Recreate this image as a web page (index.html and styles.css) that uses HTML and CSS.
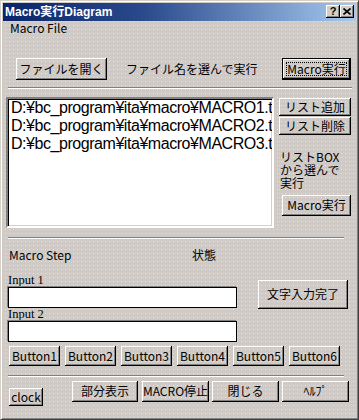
FILE: index.html
```html
<!DOCTYPE html>
<html lang="ja">
<head>
<meta charset="utf-8">
<link rel="stylesheet" href="styles.css">
</head>
<body>
<div class="window">
  <div class="titlebar">
    <span class="title">Macro実行Diagram</span>
    <span class="tbtn help">?</span>
    <span class="tbtn close"><svg width="8" height="7" viewBox="0 0 8 7"><path d="M0.5 0.5 L7.5 6.5 M7.5 0.5 L0.5 6.5" stroke="#000" stroke-width="1.6" fill="none"/></svg></span>
  </div>
  <div class="menu">Macro File</div>
  <div class="toprow">
    <button class="btn open">ファイルを開く</button>
    <span class="hint">ファイル名を選んで実行</span>
    <button class="btn default run1">Macro実行</button>
  </div>
  <div class="sep sep1"></div>
  <div class="mid">
    <div class="listbox">
      <div class="item">D:¥bc_program¥ita¥macro¥MACRO1.txt</div>
      <div class="item">D:¥bc_program¥ita¥macro¥MACRO2.txt</div>
      <div class="item">D:¥bc_program¥ita¥macro¥MACRO3.txt</div>
    </div>
    <div class="side">
      <button class="btn sbtn add">リスト追加</button>
      <button class="btn sbtn">リスト削除</button>
      <div class="sidelabel"><div class="sl">リストBOX</div><div class="sl">から選んで</div><div class="sl">実行</div></div>
      <button class="btn run2">Macro実行</button>
    </div>
  </div>
  <div class="sep sep2"></div>
  <div class="steprow"><span class="step">Macro Step</span><span class="state">状態</span></div>
  <div class="inputs">
    <div class="incol">
      <div class="inlabel">Input 1</div>
      <div class="field"></div>
      <div class="inlabel">Input 2</div>
      <div class="field"></div>
    </div>
    <button class="btn done">文字入力完了</button>
  </div>
  <div class="btnrow">
    <button class="btn nb">Button1</button>
    <button class="btn nb">Button2</button>
    <button class="btn nb">Button3</button>
    <button class="btn nb">Button4</button>
    <button class="btn nb">Button5</button>
    <button class="btn nb">Button6</button>
  </div>
  <div class="sep sep3"></div>
  <div class="bottom">
    <button class="btn clock">clock</button>
    <button class="btn bb part">部分表示</button>
    <button class="btn bb stop">MACRO停止</button>
    <button class="btn bb">閉じる</button>
    <button class="btn bb">ﾍﾙﾌﾟ</button>
  </div>
</div>
</body>
</html>
```
FILE: styles.css
```css
* { box-sizing: border-box; }
body {
  margin: 0;
  font-family: "Noto Sans CJK JP", sans-serif;
  font-size: 12px;
  color: #000;
  background: #fff;
}
.window {
  width: 359px;
  height: 420px;
  border: 1px solid;
  border-color: #d4d0c8 #404040 #404040 #d4d0c8;
  box-shadow: inset 1px 1px #fff, inset -1px -1px #808080;
  padding: 2px;
  background-color: #cfc9c6;
  background-image:
    conic-gradient(at 1px 1px, transparent 75%, #f0eeb8 0),
    conic-gradient(at 1px 1px, transparent 75%, #e8c6c8 0);
  background-size: 4px 4px, 4px 2px;
  background-position: 0 0, 2px 1px;
  display: flex;
  flex-direction: column;
}
.titlebar {
  height: 18px;
  display: flex;
  align-items: flex-start;
  background: linear-gradient(90deg, #0a246a 0%, #2a4a8c 40%, #a6caf0 100%);
  padding-left: 2px;
  padding-right: 2px;
}
.title {
  flex: 1;
  color: #fff;
  font-family: "Liberation Sans", "Noto Sans CJK JP", sans-serif;
  font-weight: bold;
  font-size: 12px;
  line-height: 18px;
}
.tbtn {
  width: 14px;
  height: 13px;
  margin-top: 2px;
  background: #d4d0c8;
  box-shadow: inset -1px -1px #000, inset 1px 1px #fff, inset -2px -2px #808080;
  display: flex;
  align-items: center;
  justify-content: center;
  font-family: "Liberation Sans", sans-serif;
  font-weight: bold;
  font-size: 11px;
  line-height: 13px;
  padding-bottom: 1px;
}
.menu {
  height: 16px;
  line-height: 14px;
  padding-left: 7px;
}
.btn {
  appearance: none;
  border: 0;
  margin: 0;
  padding: 0 0 1px 0;
  background: transparent;
  font: inherit;
  color: #000;
  display: flex;
  align-items: center;
  justify-content: center;
  white-space: nowrap;
  box-shadow: inset -1px -1px #000, inset 1px 1px #fff, inset -2px -2px #808080;
  line-height: 14px;
}
.toprow {
  margin-top: 21px;
  height: 22px;
  display: flex;
  align-items: center;
}
.open {
  margin-left: 13px;
  width: 91px;
  height: 22px;
}
.hint {
  margin-left: 19px;
  line-height: 14px;
}
.default {
  position: relative;
  border: 1px solid #000;
}
.default::after {
  content: "";
  position: absolute;
  left: 3px; top: 3px; right: 3px; bottom: 3px;
  border: 1px dotted #000;
}
.run1 {
  margin-left: auto;
  margin-right: 5px;
  width: 69px;
  height: 22px;
}
.sep {
  height: 2px;
  border-top: 1px solid #808080;
  border-bottom: 1px solid #fff;
}
.sep1 {
  margin: 7px 4px 0 5px;
}
.mid {
  margin-top: 8px;
  display: flex;
  height: 131px;
}
.listbox {
  margin-left: 3px;
  width: 268px;
  height: 131px;
  background: #fff;
  border: 2px solid;
  border-color: #808080 #fff #fff #808080;
  box-shadow: inset 1px 1px #000, inset -1px -1px #d4d0c8;
  overflow: hidden;
  padding: 0 0 0 3px;
}
.item {
  font-family: "Liberation Sans", sans-serif;
  font-size: 16px;
  letter-spacing: -0.45px;
  line-height: 18px;
  white-space: nowrap;
}
.side {
  margin-left: 5px;
  width: 72px;
  display: flex;
  flex-direction: column;
}
.sbtn {
  height: 18px;
  width: 72px;
  margin-top: 1px;
}
.sidelabel {
  margin-top: 15px;
  padding-left: 1px;
  height: 39px;
}
.sl {
  height: 13px;
  line-height: 13px;
  overflow: visible;
  white-space: nowrap;
}
.run2 {
  margin-top: 6px;
  margin-left: 3px;
  width: 69px;
  height: 21px;
}
.sep2 {
  margin: 9px 0 0 5px;
  width: 336px;
}
.steprow {
  margin-top: 9px;
  height: 14px;
  line-height: 14px;
  display: flex;
  padding-left: 6px;
}
.step {
  width: 183px;
}
.inputs {
  display: flex;
  align-items: flex-start;
}
.incol {
  margin-left: 5px;
  width: 229px;
  display: flex;
  flex-direction: column;
}
.inlabel {
  font-family: "Liberation Serif", serif;
  font-size: 12.5px;
  height: 13px;
  line-height: 13px;
  padding-left: 0;
}
.incol .inlabel:first-child {
  margin-top: 12px;
}
.field {
  height: 21px;
  background: #fff;
  border: 1px solid #000;
  box-shadow: -1px -1px 0 #808080;
}
.done {
  margin-left: 21px;
  margin-top: 18px;
  width: 90px;
  height: 29px;
}
.btnrow {
  margin-top: 4px;
  height: 20px;
  display: flex;
  gap: 5px;
  padding-left: 6px;
}
.nb {
  width: 51px;
  height: 20px;
}
.sep3 {
  margin: 9px 0 0 5px;
  width: 336px;
}
.bottom {
  display: flex;
  align-items: flex-start;
  padding-left: 6px;
}
.bb {
  margin-top: 4px;
  height: 21px;
  width: 67px;
  margin-left: 3px;
}
.clock {
  margin-top: 11px;
  width: 34px;
  height: 18px;
}
.part {
  margin-left: 29px;
  width: 66px;
}
.stop {
  margin-left: 4px;
}
```
